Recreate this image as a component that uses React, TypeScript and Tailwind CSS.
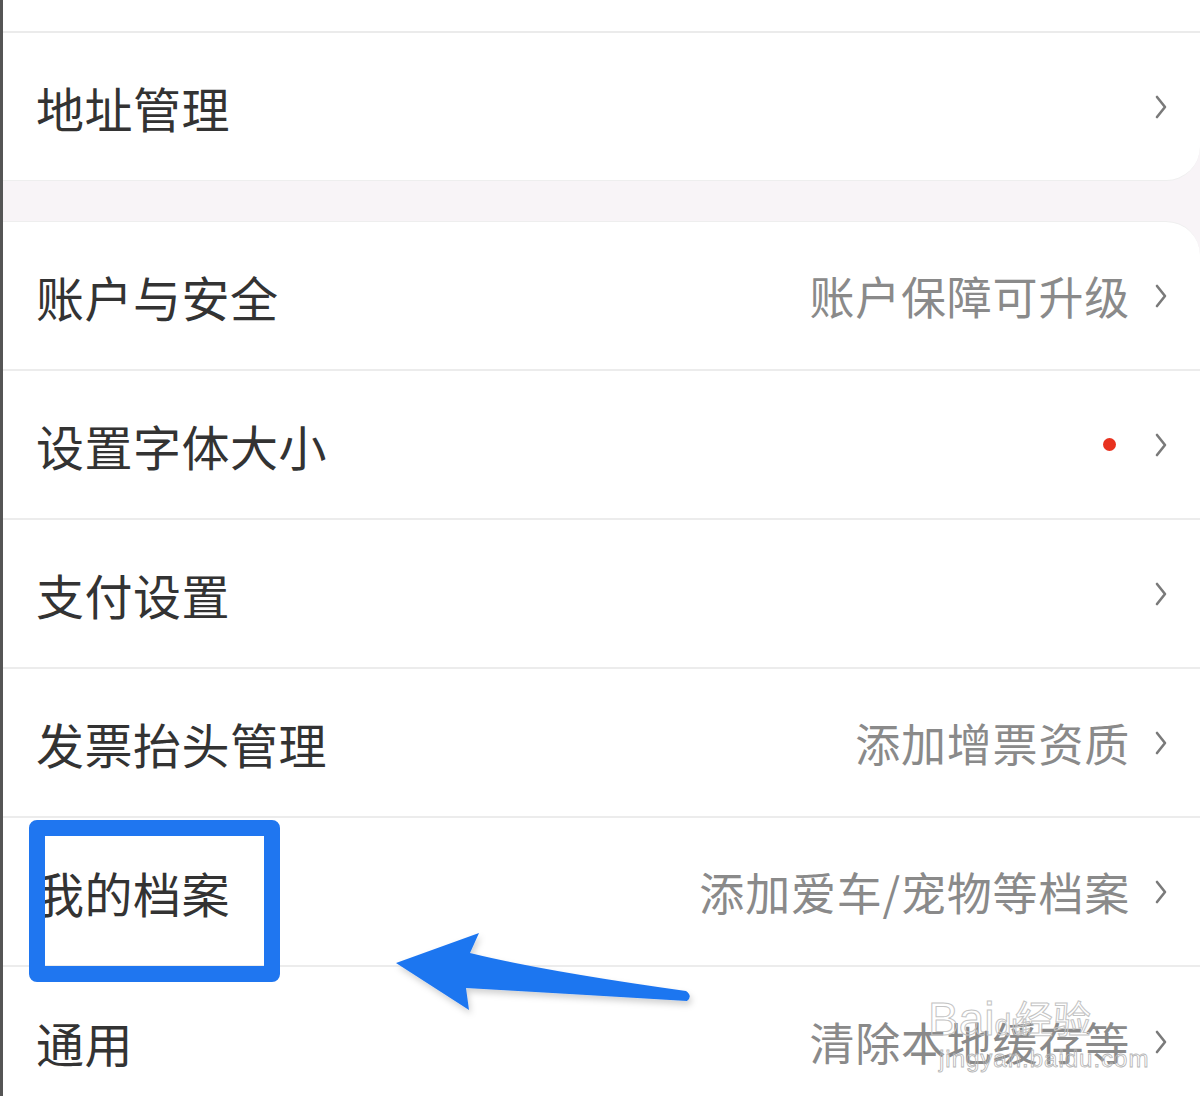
import React from 'react'

const FONT = { fontFamily: '"Noto Sans CJK SC", "Noto Sans", sans-serif' }

function Chevron() {
  return (
    <svg width="14" height="26" viewBox="0 0 14 26" className="shrink-0">
      <polyline points="3,3 11,13 3,23" fill="none" stroke="#7a7a7a" strokeWidth="2.6" strokeLinecap="round" strokeLinejoin="round" />
    </svg>
  )
}

function Row({ label, hint, dot, last }: { label: string; hint?: string; dot?: boolean; last?: boolean }) {
  return (
    <div className={`flex items-center h-[149px] pl-[33px] pr-[32px] ${last ? '' : 'border-b-2 border-[#ececec]'}`}>
      <span className="text-[48px] text-[#333] leading-none tracking-[0.5px]">{label}</span>
      <div className="flex-1" />
      {hint && <span className="text-[45px] text-[#8a8a8a] leading-none mr-[24px] tracking-[0.8px]">{hint}</span>}
      {dot && <span className="w-[13px] h-[13px] rounded-full bg-[#e8321f] mr-[38px]" />}
      <Chevron />
    </div>
  )
}

export default function App() {
  return (
    <div className="relative w-[1200px] h-[1096px] overflow-hidden bg-[#f8f4f7] border-l-[3px] border-[#555]" style={FONT}>
      <div className="h-[33px] bg-white border-b-2 border-[#ebebeb]" />
      <div className="bg-white rounded-br-[34px] border-b border-[#eee]">
        <div className="flex items-center h-[147px] pl-[33px] pr-[32px]">
          <span className="text-[48px] text-[#333] leading-none tracking-[0.5px]">地址管理</span>
          <div className="flex-1" />
          <Chevron />
        </div>
      </div>
      <div className="h-[40px]" />
      <div className="bg-white rounded-tr-[34px] border-t border-[#eee]">
        <Row label="账户与安全" hint="账户保障可升级" />
        <Row label="设置字体大小" dot />
        <Row label="支付设置" />
        <Row label="发票抬头管理" hint="添加增票资质" />
        <Row label="我的档案" hint="添加爱车/宠物等档案" />
        <Row label="通用" hint="清除本地缓存等" last />
      </div>

      {/* highlight box */}
      <div className="absolute left-[26px] top-[820px] w-[251px] h-[162px] border-[16px] border-[#1f76f0] rounded-[8px]" />

      {/* arrow */}
      <svg className="absolute left-0 top-0" width="1200" height="1096" viewBox="0 0 1200 1096">
        <defs>
          <filter id="sh" x="-10%" y="-30%" width="120%" height="160%">
            <feDropShadow dx="2" dy="4" stdDeviation="3" floodColor="#000" floodOpacity="0.18" />
          </filter>
        </defs>
        <path
          d="M393,963 L476,933 L467,953 Q540,971 683,991 Q690,996 684,1001 Q570,994 463,988 L466,1010 Z"
          fill="#1f76f0"
          filter="url(#sh)"
        />
      </svg>

      {/* watermark */}
      <div className="absolute left-[925px] top-[996px] text-[46px] leading-none" style={{ fontFamily: '"Liberation Sans", sans-serif', WebkitTextStroke: '1px #c4c4c4', color: 'transparent' }}>
        Bai<span className="text-[30px]">du</span>
      </div>
      <div className="absolute left-[1012px] top-[998px] text-[38px] leading-none" style={{ WebkitTextStroke: '1px #c4c4c4', color: 'transparent' }}>经验</div>
      <div className="absolute left-[936px] top-[1047px] text-[24px] leading-none tracking-[1px]" style={{ fontFamily: '"Liberation Sans", sans-serif', WebkitTextStroke: '0.8px #b4b4b4', color: 'transparent' }}>jingyan.baidu.com</div>
    </div>
  )
}
